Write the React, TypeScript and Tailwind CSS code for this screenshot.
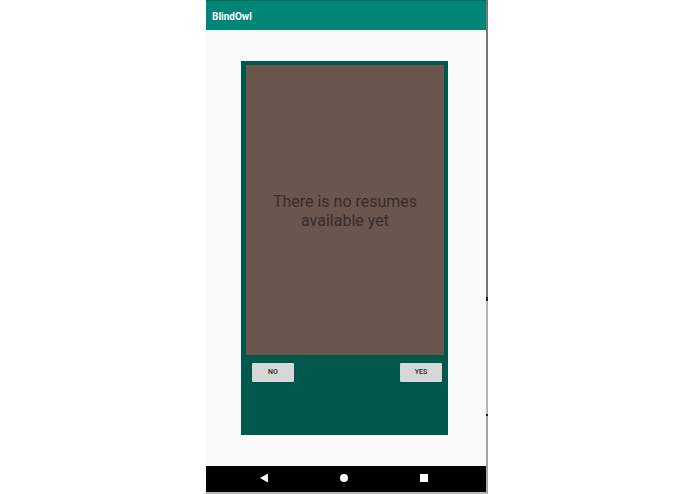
import type { ReactNode } from 'react'

type ActionButtonProps = {
  children: ReactNode
}

function ActionButton({ children }: ActionButtonProps) {
  return (
    <button
      type="button"
      className="h-[19px] w-[42px] rounded-[1px] bg-[#d6d7d7] text-center text-[7px] leading-[19px] font-medium text-[#212121] shadow-xs"
    >
      {children}
    </button>
  )
}

function AppBar() {
  return (
    <header className="flex h-[30px] items-center border-t border-[#00695c] bg-[#008577] px-1.5 pt-0.5 shadow-xs">
      <h1 className="text-[10px] leading-3 font-bold text-white">BlindOwl</h1>
    </header>
  )
}

function ResumeCard() {
  return (
    <section className="flex flex-1 flex-col bg-[#00574b] pt-1 pr-1 pb-[53px] pl-[5px]">
      <div className="flex flex-1 items-center justify-center bg-[#6b564e] px-5 pt-0.5">
        <p className="text-center text-[16px] leading-[19px] text-[#372b27]">
          There is no resumes available yet
        </p>
      </div>
      <div className="flex justify-between pt-2 pr-0.5 pl-1.5">
        <ActionButton>NO</ActionButton>
        <ActionButton>YES</ActionButton>
      </div>
    </section>
  )
}

function NavigationBar() {
  return (
    <nav
      aria-label="System"
      className="grid h-[26px] grid-cols-3 place-items-center bg-black pr-[22px] pb-0.5 pl-[18px] text-white"
    >
      <button type="button" aria-label="Back">
        <svg viewBox="0 0 8 10" className="h-[10px] w-2" fill="currentColor">
          <path d="M8 .5v9L0 5z" />
        </svg>
      </button>
      <button type="button" aria-label="Home">
        <svg viewBox="0 0 8 8" className="size-2" fill="currentColor">
          <circle cx="4" cy="4" r="4" />
        </svg>
      </button>
      <button type="button" aria-label="Recent apps">
        <svg viewBox="0 0 8 8" className="size-2" fill="currentColor">
          <rect width="8" height="8" rx=".4" />
        </svg>
      </button>
    </nav>
  )
}

// Side of the device frame, with its two hardware button marks
function DeviceEdge() {
  return (
    <div aria-hidden className="flex w-0.5 flex-col">
      <div className="h-[297px] bg-[#777777]" />
      <div className="h-1 bg-[#222222]" />
      <div className="h-[113px] bg-[#b5b5b5]" />
      <div className="h-0.5 bg-[#222222]" />
      <div className="flex-1 bg-[#a5a5a5]" />
    </div>
  )
}

export default function App() {
  return (
    <div className="flex min-h-screen justify-center bg-white pr-px font-['Roboto',sans-serif]">
      <div className="flex w-full max-w-[282px]">
        <div className="flex flex-1 flex-col border-b-2 border-[#b8b8b8] bg-[#fafafa]">
          <AppBar />
          <main className="flex flex-1 flex-col pt-[31px] pr-[38px] pb-[31px] pl-[35px]">
            <ResumeCard />
          </main>
          <NavigationBar />
        </div>
        <DeviceEdge />
      </div>
    </div>
  )
}
